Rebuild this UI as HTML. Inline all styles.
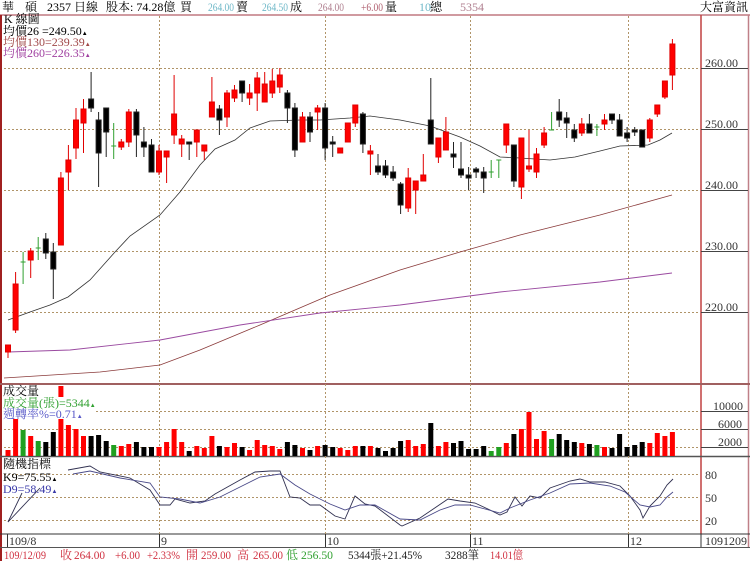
<!DOCTYPE html>
<html><head><meta charset="utf-8"><style>
html,body{margin:0;padding:0;background:#fff;width:750px;height:561px;overflow:hidden}
svg{display:block}
text{font-family:"Liberation Serif","Noto Serif CJK TC","Noto Sans CJK TC",serif;font-size:12px}
</style></head><body>
<svg width="750" height="561" viewBox="0 0 750 561" xmlns="http://www.w3.org/2000/svg">
<rect width="750" height="561" fill="#fff"/>
<g>
<text x="2" y="11">華</text><text x="25" y="11">碩</text>
<text x="47" y="11">2357 日線</text>
<text x="106" y="11">股本: 74.28億</text>
<text x="180" y="11">買</text>
<text x="208" y="11" fill="#6fb8c8" font-size="11" textLength="26" lengthAdjust="spacingAndGlyphs">264.00</text><text x="236" y="11">賣</text>
<text x="262" y="11" fill="#6fb8c8" font-size="11" textLength="26" lengthAdjust="spacingAndGlyphs">264.50</text><text x="290" y="11">成</text>
<text x="318" y="11" fill="#b08090" font-size="11" textLength="26" lengthAdjust="spacingAndGlyphs">264.00</text>
<text x="361" y="11" fill="#b06070" font-size="11" textLength="22" lengthAdjust="spacingAndGlyphs">+6.00</text><text x="385" y="11">量</text>
<text x="419" y="11" fill="#6fb8c8" font-size="11">10</text><text x="430" y="11">總</text>
<text x="460" y="11" fill="#b08090" font-size="11">5354</text>
<text x="700" y="11">大富資訊</text>
</g>
<line x1="0" y1="15" x2="750" y2="15" stroke="#c07880" stroke-width="1.5"/>
<line x1="1" y1="15" x2="1" y2="561" stroke="#a02020" stroke-width="2"/>
<line x1="748.5" y1="15" x2="748.5" y2="548" stroke="#c08088" stroke-width="1.5"/>
<line x1="701" y1="15" x2="701" y2="534" stroke="#c04040" stroke-width="1.5"/>
<line x1="0" y1="384" x2="750" y2="384" stroke="#a06060" stroke-width="2"/>
<line x1="0" y1="456.5" x2="750" y2="456.5" stroke="#555" stroke-width="1.5"/>
<line x1="0" y1="534" x2="750" y2="534" stroke="#333" stroke-width="1"/>
<line x1="0" y1="547.5" x2="750" y2="547.5" stroke="#555" stroke-width="1"/>
<g stroke="#b09468" stroke-width="1" stroke-dasharray="2,2" fill="none">
<line x1="4" y1="68.5" x2="700" y2="68.5"/><line x1="4" y1="129.5" x2="700" y2="129.5"/>
<line x1="4" y1="190.5" x2="700" y2="190.5"/><line x1="4" y1="251.5" x2="700" y2="251.5"/>
<line x1="4" y1="312.5" x2="700" y2="312.5"/>
<line x1="4" y1="411.5" x2="700" y2="411.5"/><line x1="4" y1="429.5" x2="700" y2="429.5"/><line x1="4" y1="447.5" x2="700" y2="447.5"/>
<line x1="4" y1="474.5" x2="700" y2="474.5"/><line x1="4" y1="497.5" x2="700" y2="497.5"/><line x1="4" y1="520.5" x2="700" y2="520.5"/>
<line x1="159.5" y1="16" x2="159.5" y2="534"/><line x1="325.5" y1="16" x2="325.5" y2="534"/>
<line x1="470.5" y1="16" x2="470.5" y2="534"/><line x1="628.5" y1="16" x2="628.5" y2="534"/>
</g>
<g stroke="#444" stroke-width="1">
<line x1="701" y1="68.5" x2="748" y2="68.5"/><line x1="701" y1="129.5" x2="748" y2="129.5"/>
<line x1="701" y1="190.5" x2="748" y2="190.5"/><line x1="701" y1="251.5" x2="748" y2="251.5"/>
<line x1="701" y1="312.5" x2="748" y2="312.5"/>
<line x1="701" y1="411.5" x2="748" y2="411.5"/><line x1="701" y1="429.5" x2="748" y2="429.5"/><line x1="701" y1="447.5" x2="748" y2="447.5"/>
</g>
<g fill="#333">
<text x="705" y="67">260.00</text><text x="705" y="128">250.00</text><text x="705" y="189">240.00</text>
<text x="705" y="250">230.00</text><text x="705" y="311">220.00</text>
<text x="713" y="410">10000</text><text x="718" y="428">6000</text><text x="718" y="446">2000</text>
<text x="705" y="479">80</text><text x="705" y="502">50</text><text x="705" y="525">20</text>
</g>
<polyline fill="none" stroke="#333" stroke-width="0.8" points="8,320 30,312 50,305 68,297 90,280 115,252 130,236 160,215 180,192 200,165 215,149 235,140 250,128 270,121 300,120 320,120 350,118 370,116 400,120 430,126 460,137 480,146 500,157 520,158 550,160 575,157 600,151 620,146 648,145 660,140 672,133"/>
<polyline fill="none" stroke="#8a3a3a" stroke-width="0.8" points="4,378 100,372 160,365 200,350 260,325 330,295 400,270 460,252 520,235 600,215 672,195"/>
<polyline fill="none" stroke="#9a4aa0" stroke-width="0.9" points="8,352 70,350 160,340 240,325 320,313 400,305 500,292 600,282 672,273"/>
<g stroke="#e00000" fill="#ff0000" stroke-width="1">
<line x1="8" y1="345" x2="8" y2="358"/><rect x="5.5" y="345" width="5" height="7"/>
<line x1="15.6" y1="272" x2="15.6" y2="333"/><rect x="13.1" y="284" width="5" height="46"/>
<line x1="30.7" y1="248" x2="30.7" y2="278"/><rect x="28.2" y="251" width="5" height="9"/>
<line x1="60.9" y1="172" x2="60.9" y2="245"/><rect x="58.4" y="178" width="5" height="67"/>
<line x1="68.4" y1="145" x2="68.4" y2="190"/><rect x="65.9" y="160" width="5" height="12"/>
<line x1="76" y1="108" x2="76" y2="159"/><rect x="73.5" y="120" width="5" height="28"/>
<line x1="83.5" y1="99" x2="83.5" y2="153"/><rect x="81" y="109" width="5" height="14"/>
<line x1="121.3" y1="139" x2="121.3" y2="150"/><rect x="118.8" y="142" width="5" height="5"/>
<line x1="128.8" y1="109" x2="128.8" y2="147"/><rect x="126.3" y="112" width="5" height="30"/>
<line x1="159" y1="145" x2="159" y2="175"/><rect x="156.5" y="151" width="5" height="21"/>
<line x1="166.6" y1="151" x2="166.6" y2="183"/><rect x="164.1" y="151" width="5" height="6"/>
<line x1="174.1" y1="75" x2="174.1" y2="144"/><rect x="171.6" y="114" width="5" height="21"/>
<line x1="181.7" y1="135" x2="181.7" y2="157"/><rect x="179.2" y="139" width="5" height="5"/>
<line x1="196.8" y1="130" x2="196.8" y2="157"/><rect x="194.3" y="130" width="5" height="12"/>
<line x1="204.3" y1="145" x2="204.3" y2="160"/><rect x="201.8" y="145" width="5" height="6"/>
<line x1="211.9" y1="77" x2="211.9" y2="117"/><rect x="209.4" y="102" width="5" height="15"/>
<line x1="227" y1="90" x2="227" y2="127"/><rect x="224.5" y="93" width="5" height="24"/>
<line x1="234.5" y1="85" x2="234.5" y2="102"/><rect x="232" y="90" width="5" height="8"/>
<line x1="249.6" y1="84" x2="249.6" y2="105"/><rect x="247.1" y="93" width="5" height="5"/>
<line x1="257.2" y1="72" x2="257.2" y2="111"/><rect x="254.7" y="78" width="5" height="15"/>
<line x1="264.7" y1="72" x2="264.7" y2="102"/><rect x="262.2" y="84" width="5" height="18"/>
<line x1="272.3" y1="69" x2="272.3" y2="98"/><rect x="269.8" y="81" width="5" height="12"/>
<line x1="279.8" y1="68" x2="279.8" y2="93"/><rect x="277.3" y="75" width="5" height="12"/>
<line x1="302.5" y1="112" x2="302.5" y2="142"/><rect x="300" y="117" width="5" height="25"/>
<line x1="317.6" y1="105" x2="317.6" y2="130"/><rect x="315.1" y="108" width="5" height="4"/>
<line x1="340.2" y1="148" x2="340.2" y2="153"/><rect x="337.7" y="148" width="5" height="5"/>
<line x1="347.8" y1="123" x2="347.8" y2="142"/><rect x="345.3" y="123" width="5" height="19"/>
<line x1="355.3" y1="105" x2="355.3" y2="127"/><rect x="352.8" y="105" width="5" height="18"/>
<line x1="370.4" y1="145" x2="370.4" y2="175"/><rect x="367.9" y="151" width="5" height="3"/>
<line x1="408.2" y1="168" x2="408.2" y2="212"/><rect x="405.7" y="178" width="5" height="30"/>
<line x1="415.7" y1="181" x2="415.7" y2="214"/><rect x="413.2" y="181" width="5" height="9"/>
<line x1="423.3" y1="154" x2="423.3" y2="181"/><rect x="420.8" y="175" width="5" height="6"/>
<line x1="438.4" y1="138" x2="438.4" y2="163"/><rect x="435.9" y="138" width="5" height="19"/>
<line x1="445.9" y1="117" x2="445.9" y2="150"/><rect x="443.4" y="132" width="5" height="18"/>
<line x1="506.3" y1="124" x2="506.3" y2="153"/><rect x="503.8" y="124" width="5" height="21"/>
<line x1="521.4" y1="138" x2="521.4" y2="199"/><rect x="518.9" y="138" width="5" height="49"/>
<line x1="529" y1="130" x2="529" y2="172"/><rect x="526.5" y="166" width="5" height="3"/>
<line x1="536.5" y1="148" x2="536.5" y2="178"/><rect x="534" y="154" width="5" height="18"/>
<line x1="544.1" y1="127" x2="544.1" y2="148"/><rect x="541.6" y="133" width="5" height="12"/>
<line x1="581.8" y1="118" x2="581.8" y2="136"/><rect x="579.3" y="124" width="5" height="9"/>
<line x1="604.5" y1="114" x2="604.5" y2="130"/><rect x="602" y="120" width="5" height="4"/>
<line x1="649.8" y1="118" x2="649.8" y2="142"/><rect x="647.3" y="120" width="5" height="18"/>
<line x1="657.3" y1="105" x2="657.3" y2="117"/><rect x="654.8" y="105" width="5" height="9"/>
<line x1="664.9" y1="81" x2="664.9" y2="99"/><rect x="662.4" y="81" width="5" height="16"/>
<line x1="672.4" y1="39" x2="672.4" y2="90"/><rect x="669.9" y="44" width="5" height="31"/>
</g>
<g stroke="#222" fill="#000" stroke-width="1">
<line x1="45.8" y1="233" x2="45.8" y2="259"/><rect x="43.3" y="239" width="5" height="14"/>
<line x1="53.3" y1="243" x2="53.3" y2="299"/><rect x="50.8" y="252" width="5" height="17"/>
<line x1="91.1" y1="72" x2="91.1" y2="112"/><rect x="88.6" y="99" width="5" height="9"/>
<line x1="98.6" y1="112" x2="98.6" y2="187"/><rect x="96.1" y="120" width="5" height="33"/>
<line x1="106.2" y1="108" x2="106.2" y2="157"/><rect x="103.7" y="108" width="5" height="24"/>
<line x1="136.4" y1="109" x2="136.4" y2="157"/><rect x="133.9" y="112" width="5" height="23"/>
<line x1="143.9" y1="127" x2="143.9" y2="157"/><rect x="141.4" y="142" width="5" height="5"/>
<line x1="151.5" y1="139" x2="151.5" y2="172"/><rect x="149" y="145" width="5" height="27"/>
<line x1="189.2" y1="142" x2="189.2" y2="160"/><rect x="186.7" y="142" width="5" height="2"/>
<line x1="219.4" y1="105" x2="219.4" y2="135"/><rect x="216.9" y="109" width="5" height="11"/>
<line x1="242.1" y1="81" x2="242.1" y2="102"/><rect x="239.6" y="81" width="5" height="12"/>
<line x1="287.4" y1="90" x2="287.4" y2="123"/><rect x="284.9" y="93" width="5" height="15"/>
<line x1="294.9" y1="103" x2="294.9" y2="157"/><rect x="292.4" y="108" width="5" height="42"/>
<line x1="310" y1="112" x2="310" y2="142"/><rect x="307.5" y="117" width="5" height="15"/>
<line x1="325.1" y1="103" x2="325.1" y2="160"/><rect x="322.6" y="108" width="5" height="40"/>
<line x1="332.7" y1="136" x2="332.7" y2="157"/><rect x="330.2" y="142" width="5" height="2"/>
<line x1="362.9" y1="112" x2="362.9" y2="153"/><rect x="360.4" y="114" width="5" height="30"/>
<line x1="378" y1="154" x2="378" y2="175"/><rect x="375.5" y="166" width="5" height="6"/>
<line x1="385.5" y1="160" x2="385.5" y2="178"/><rect x="383" y="166" width="5" height="9"/>
<line x1="393.1" y1="166" x2="393.1" y2="181"/><rect x="390.6" y="172" width="5" height="6"/>
<line x1="400.6" y1="182" x2="400.6" y2="214"/><rect x="398.1" y="184" width="5" height="21"/>
<line x1="430.8" y1="78" x2="430.8" y2="144"/><rect x="428.3" y="120" width="5" height="24"/>
<line x1="453.5" y1="142" x2="453.5" y2="168"/><rect x="451" y="154" width="5" height="3"/>
<line x1="461" y1="142" x2="461" y2="178"/><rect x="458.5" y="169" width="5" height="6"/>
<line x1="468.6" y1="167" x2="468.6" y2="190"/><rect x="466.1" y="175" width="5" height="3"/>
<line x1="476.1" y1="167" x2="476.1" y2="178"/><rect x="473.6" y="169" width="5" height="3"/>
<line x1="483.7" y1="167" x2="483.7" y2="193"/><rect x="481.2" y="172" width="5" height="6"/>
<line x1="513.9" y1="145" x2="513.9" y2="187"/><rect x="511.4" y="145" width="5" height="36"/>
<line x1="559.2" y1="99" x2="559.2" y2="127"/><rect x="556.7" y="112" width="5" height="8"/>
<line x1="566.7" y1="112" x2="566.7" y2="138"/><rect x="564.2" y="118" width="5" height="5"/>
<line x1="574.3" y1="124" x2="574.3" y2="142"/><rect x="571.8" y="130" width="5" height="8"/>
<line x1="589.4" y1="114" x2="589.4" y2="133"/><rect x="586.9" y="124" width="5" height="9"/>
<line x1="612" y1="114" x2="612" y2="124"/><rect x="609.5" y="114" width="5" height="6"/>
<line x1="619.6" y1="114" x2="619.6" y2="136"/><rect x="617.1" y="120" width="5" height="16"/>
<line x1="627.1" y1="127" x2="627.1" y2="142"/><rect x="624.6" y="133" width="5" height="5"/>
<line x1="634.7" y1="127" x2="634.7" y2="136"/><rect x="632.2" y="130" width="5" height="2"/>
<line x1="642.2" y1="130" x2="642.2" y2="147"/><rect x="639.7" y="130" width="5" height="17"/>
</g>
<g stroke="#30a030" stroke-width="1">
<line x1="23.1" y1="252" x2="23.1" y2="284"/><line x1="20.6" y1="262" x2="25.6" y2="262"/>
<line x1="38.2" y1="237" x2="38.2" y2="260"/><line x1="35.7" y1="248" x2="40.7" y2="248"/>
<line x1="113.7" y1="123" x2="113.7" y2="159"/><line x1="111.2" y1="146" x2="116.2" y2="146"/>
<line x1="491.2" y1="160" x2="491.2" y2="178"/><line x1="488.7" y1="172" x2="493.7" y2="172"/>
<line x1="498.8" y1="160" x2="498.8" y2="178"/><line x1="496.3" y1="160" x2="501.3" y2="160"/>
<line x1="551.6" y1="112" x2="551.6" y2="130"/><line x1="549.1" y1="130" x2="554.1" y2="130"/>
<line x1="596.9" y1="124" x2="596.9" y2="136"/><line x1="594.4" y1="127" x2="599.4" y2="127"/>
</g>
<text x="4" y="23">K 線圖</text>
<text x="3" y="35" fill="#000">均價26 =249.50<tspan font-size="6">▲</tspan></text>
<text x="3" y="46" fill="#a04848">均價130=239.39<tspan font-size="6">▲</tspan></text>
<text x="3" y="57" fill="#a040a0">均價260=226.35<tspan font-size="6">▲</tspan></text>
<g fill="#ff0000">
<rect x="5.5" y="450" width="5" height="6"/><rect x="13.1" y="419" width="5" height="37"/>
<rect x="28.2" y="436" width="5" height="20"/><rect x="58.4" y="386" width="5" height="70"/>
<rect x="65.9" y="425" width="5" height="31"/><rect x="73.5" y="429" width="5" height="27"/>
<rect x="81" y="436" width="5" height="20"/><rect x="118.8" y="446" width="5" height="10"/>
<rect x="126.3" y="444" width="5" height="12"/><rect x="156.5" y="447" width="5" height="9"/>
<rect x="164.1" y="442" width="5" height="14"/><rect x="171.6" y="429" width="5" height="27"/>
<rect x="179.2" y="442" width="5" height="14"/><rect x="194.3" y="446" width="5" height="10"/>
<rect x="201.8" y="448" width="5" height="8"/><rect x="209.4" y="436" width="5" height="20"/>
<rect x="224.5" y="447" width="5" height="9"/><rect x="232" y="443" width="5" height="13"/>
<rect x="247.1" y="450" width="5" height="6"/><rect x="254.7" y="440" width="5" height="16"/>
<rect x="262.2" y="445" width="5" height="11"/><rect x="269.8" y="446" width="5" height="10"/>
<rect x="277.3" y="449" width="5" height="7"/><rect x="300" y="448" width="5" height="8"/>
<rect x="315.1" y="446" width="5" height="10"/><rect x="337.7" y="448" width="5" height="8"/>
<rect x="345.3" y="450" width="5" height="6"/><rect x="352.8" y="446" width="5" height="10"/>
<rect x="367.9" y="446" width="5" height="10"/><rect x="405.7" y="440" width="5" height="16"/>
<rect x="413.2" y="446" width="5" height="10"/><rect x="420.8" y="444" width="5" height="12"/>
<rect x="435.9" y="446" width="5" height="10"/><rect x="443.4" y="442" width="5" height="14"/>
<rect x="503.8" y="443" width="5" height="13"/><rect x="518.9" y="429" width="5" height="27"/>
<rect x="526.5" y="412" width="5" height="44"/><rect x="534" y="439" width="5" height="17"/>
<rect x="541.6" y="431" width="5" height="25"/><rect x="579.3" y="443" width="5" height="13"/>
<rect x="602" y="447" width="5" height="9"/><rect x="647.3" y="443" width="5" height="13"/>
<rect x="654.8" y="433" width="5" height="23"/><rect x="662.4" y="436" width="5" height="20"/>
<rect x="669.9" y="432" width="5" height="24"/>
</g>
<g fill="#000">
<rect x="43.3" y="442" width="5" height="14"/><rect x="50.8" y="432" width="5" height="24"/>
<rect x="88.6" y="436" width="5" height="20"/><rect x="96.1" y="435" width="5" height="21"/>
<rect x="103.7" y="441" width="5" height="15"/><rect x="133.9" y="442" width="5" height="14"/>
<rect x="141.4" y="447" width="5" height="9"/><rect x="149" y="447" width="5" height="9"/>
<rect x="186.7" y="451" width="5" height="5"/><rect x="216.9" y="446" width="5" height="10"/>
<rect x="239.6" y="447" width="5" height="9"/><rect x="284.9" y="442" width="5" height="14"/>
<rect x="292.4" y="445" width="5" height="11"/><rect x="307.5" y="450" width="5" height="6"/>
<rect x="322.6" y="445" width="5" height="11"/><rect x="330.2" y="447" width="5" height="9"/>
<rect x="360.4" y="446" width="5" height="10"/><rect x="375.5" y="448" width="5" height="8"/>
<rect x="383" y="451" width="5" height="5"/><rect x="390.6" y="448" width="5" height="8"/>
<rect x="398.1" y="441" width="5" height="15"/><rect x="428.3" y="423" width="5" height="33"/>
<rect x="451" y="443" width="5" height="13"/><rect x="458.5" y="441" width="5" height="15"/>
<rect x="466.1" y="449" width="5" height="7"/><rect x="473.6" y="449" width="5" height="7"/>
<rect x="481.2" y="446" width="5" height="10"/><rect x="511.4" y="434" width="5" height="22"/>
<rect x="556.7" y="434" width="5" height="22"/><rect x="564.2" y="440" width="5" height="16"/>
<rect x="571.8" y="442" width="5" height="14"/><rect x="586.9" y="444" width="5" height="12"/>
<rect x="609.5" y="448" width="5" height="8"/><rect x="617.1" y="434" width="5" height="22"/>
<rect x="624.6" y="447" width="5" height="9"/><rect x="632.2" y="445" width="5" height="11"/>
<rect x="639.7" y="442" width="5" height="14"/>
</g>
<g fill="#20a020">
<rect x="20.6" y="430" width="5" height="26"/><rect x="35.7" y="441" width="5" height="15"/>
<rect x="111.2" y="445" width="5" height="11"/><rect x="488.7" y="451" width="5" height="5"/>
<rect x="496.3" y="447" width="5" height="9"/><rect x="549.1" y="439" width="5" height="17"/>
<rect x="594.4" y="445" width="5" height="11"/>
</g>
<rect x="2" y="386" width="56" height="11" fill="#fff"/>
<rect x="2" y="397" width="94" height="22" fill="#fff"/>
<text x="3" y="395">成交量</text>
<text x="3" y="407" fill="#30a030">成交量(張)=5344<tspan font-size="6">▲</tspan></text>
<text x="3" y="418" fill="#5858c8">週轉率%=0.71<tspan font-size="6">▲</tspan></text>
<text x="3" y="468">隨機指標</text>
<text x="3" y="481">K9=75.55<tspan font-size="6">▲</tspan></text>
<text x="3" y="493" fill="#3838a8">D9=58.49<tspan font-size="6">▲</tspan></text>
<polyline fill="none" stroke="#303050" stroke-width="0.9" points="8,522 22,493"/>
<polyline fill="none" stroke="#303050" stroke-width="0.9" points="8,522 40,488"/>
<polyline fill="none" stroke="#303050" stroke-width="0.9" points="68,470 90,466 100,472 130,478 150,490 160,505 170,505 175,499 190,503 205,501 215,494 240,480 255,472 270,471 280,471 290,497 300,498 310,505 320,505 335,516 345,519 355,496 365,504 375,506 400,525 402,526 420,518 448,499 460,501 475,503 490,510 500,515 507,512 515,497 522,506 530,496 540,498 550,488 570,481 580,479 590,482 605,482 620,486 630,496 640,510 643,518 650,506 660,496 667,485 673,479"/>
<polyline fill="none" stroke="#4a4a88" stroke-width="0.9" points="73,474 90,471 120,478 150,483 160,497 180,499 200,503 220,497 240,487 260,477 280,474 295,485 310,494 330,504 345,510 360,505 375,505 400,519 420,520 440,510 455,505 470,505 485,509 500,513 510,508 530,500 550,493 570,484 590,483 610,486 625,492 640,505 650,507 660,505 667,497 673,492"/>
<line x1="7.5" y1="534" x2="7.5" y2="547" stroke="#333"/>
<line x1="159.5" y1="534" x2="159.5" y2="547" stroke="#333"/>
<line x1="325.5" y1="534" x2="325.5" y2="547" stroke="#333"/>
<line x1="470.5" y1="534" x2="470.5" y2="547" stroke="#333"/>
<line x1="628.5" y1="534" x2="628.5" y2="547" stroke="#333"/>
<line x1="701" y1="534" x2="701" y2="547" stroke="#333"/>
<g fill="#333">
<text x="9" y="545">109/8</text><text x="161" y="545">9</text><text x="327" y="545">10</text>
<text x="472" y="545">11</text><text x="630" y="545">12</text><text x="705" y="545">1091209</text>
</g>
<g fill="#d03040">
<text x="4" y="559" textLength="42" lengthAdjust="spacingAndGlyphs">109/12/09</text><text x="60" y="559">收</text>
<text x="74" y="559" textLength="31" lengthAdjust="spacingAndGlyphs">264.00</text>
<text x="115" y="559" textLength="25" lengthAdjust="spacingAndGlyphs">+6.00</text>
<text x="147" y="559" textLength="33" lengthAdjust="spacingAndGlyphs">+2.33%</text>
<text x="186" y="559">開</text><text x="201" y="559" textLength="30" lengthAdjust="spacingAndGlyphs">259.00</text>
<text x="237" y="559">高</text><text x="253" y="559" textLength="30" lengthAdjust="spacingAndGlyphs">265.00</text>
<text x="490" y="559" textLength="33" lengthAdjust="spacingAndGlyphs">14.01億</text>
</g>
<text x="286" y="559" fill="#30a030">低</text><text x="301" y="559" fill="#30a030" textLength="32" lengthAdjust="spacingAndGlyphs">256.50</text>
<text x="348" y="559" fill="#222" textLength="74" lengthAdjust="spacingAndGlyphs">5344張+21.45%</text>
<text x="445" y="559" fill="#222" textLength="34" lengthAdjust="spacingAndGlyphs">3288筆</text>
</svg>
</body></html>
